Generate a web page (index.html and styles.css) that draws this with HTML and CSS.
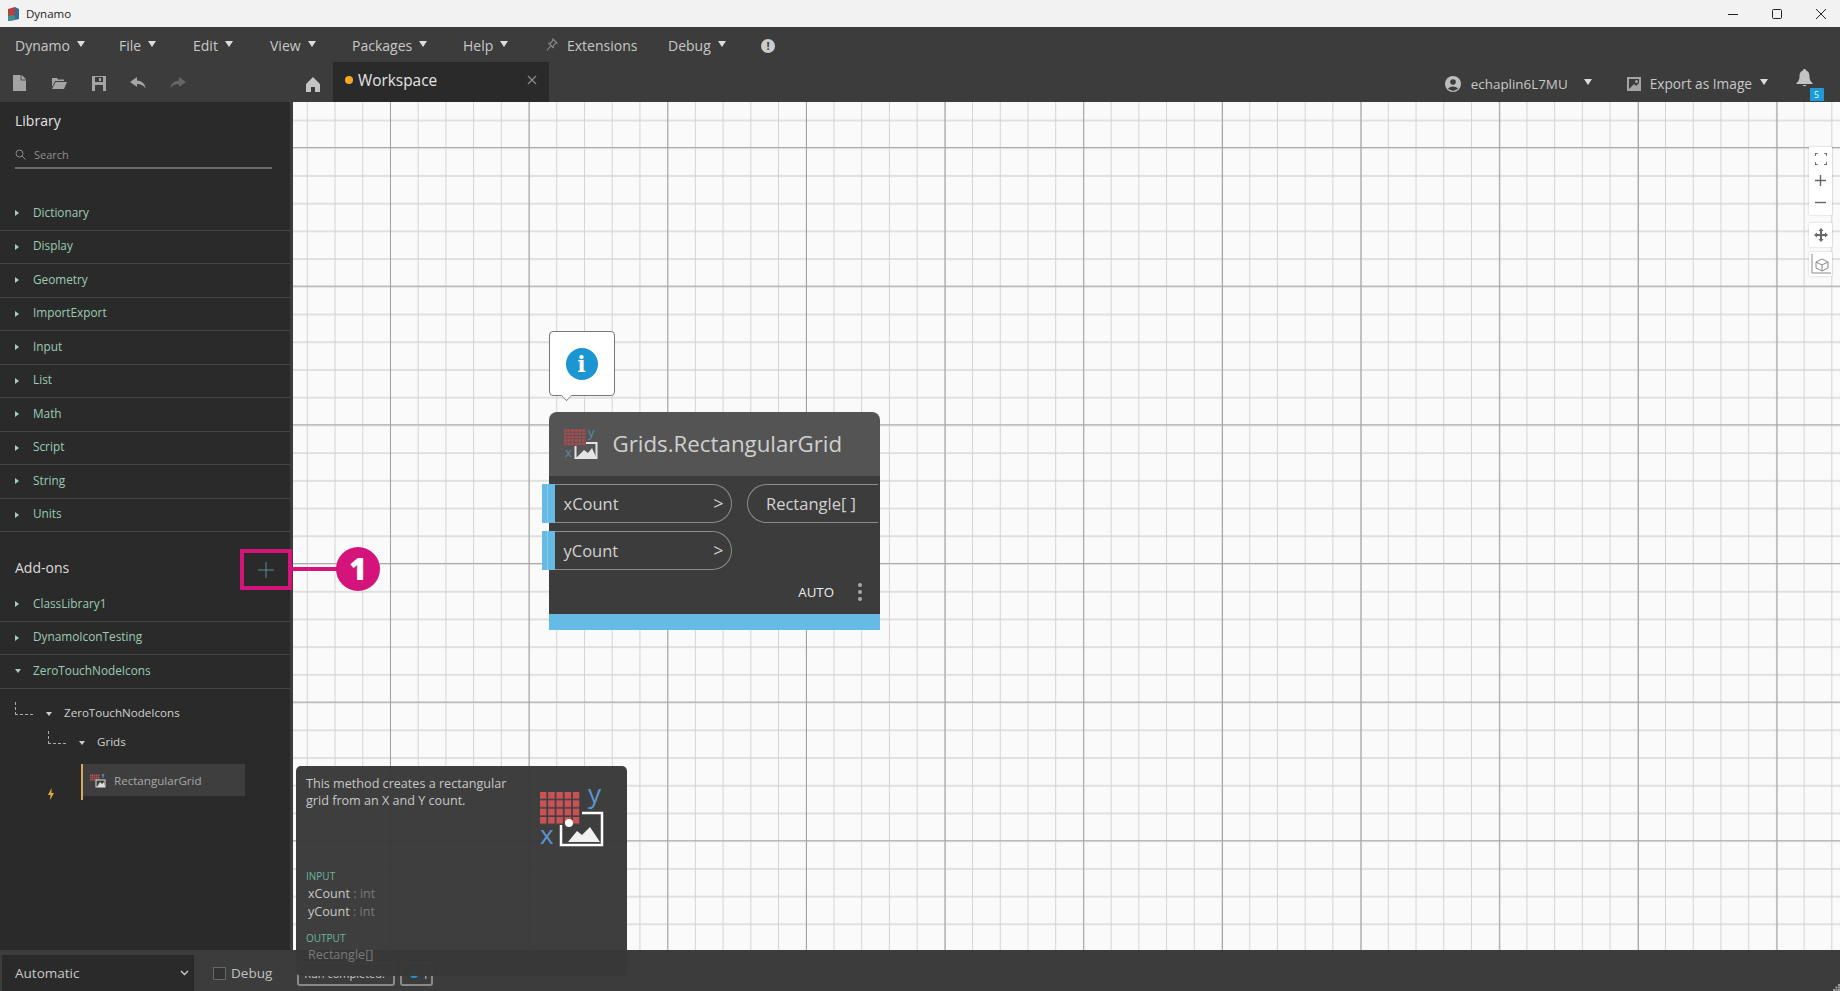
FILE: index.html
```html
<!DOCTYPE html>
<html lang="en">
<head>
  <meta charset="UTF-8">
  <title>Dynamo</title>
  <link rel="stylesheet" href="styles.css">
</head>
<body>
<div class="app">

  <header class="titlebar">
    <div class="title-left">
      <svg class="app-logo" width="12" height="14" viewBox="0 0 12 14"><path d="M0 2 L7 0 L7 13 L0 14 Z" fill="#b5403f"/><path d="M7 0 L11 2 L11 12 L7 13 Z" fill="#2f6d9c"/><path d="M0 9 L4 8 L7 9 L7 13 L0 14 Z" fill="#3f8f8c"/></svg>
      <span>Dynamo</span>
    </div>
    <div class="win-btns">
      <svg width="12" height="12" viewBox="0 0 12 12"><path d="M1 6.500 H11" stroke="#222" stroke-width="1"/></svg>
      <svg width="12" height="12" viewBox="0 0 12 12"><rect x="1.500" y="1.500" width="9" height="9" rx="1" fill="none" stroke="#222"/></svg>
      <svg width="12" height="12" viewBox="0 0 12 12"><path d="M1 1 L11 11 M11 1 L1 11" stroke="#222"/></svg>
    </div>
  </header>

  <nav class="menubar">
    <span class="menu-item w-dynamo">Dynamo <i class="caret"></i></span>
    <span class="menu-item w-file">File <i class="caret"></i></span>
    <span class="menu-item w-edit">Edit <i class="caret"></i></span>
    <span class="menu-item w-view">View <i class="caret"></i></span>
    <span class="menu-item w-packages">Packages <i class="caret"></i></span>
    <span class="menu-item w-help">Help <i class="caret"></i></span>
    <span class="menu-item w-ext">
      <svg width="12" height="14" viewBox="0 0 12 14"><path d="M7 1 L11 5 L9 5.500 L7 8.500 L7.500 10 L2.500 5 L4 5.500 L6.500 3 Z M4.500 8 L1 12.500" fill="none" stroke="#8a8a8a" stroke-width="1.100"/></svg>
      Extensions
    </span>
    <span class="menu-item w-debug">Debug <i class="caret"></i></span>
    <span class="menu-info">!</span>
  </nav>

  <div class="toolbar">
    <div class="tool-icons">
      <svg width="13" height="16" viewBox="0 0 13 16"><path d="M0 0 H8 L13 5 V16 H0 Z" fill="#a4a4a4"/><path d="M8.800 0 V4.200 H13 Z" fill="#a4a4a4"/><path d="M8 0 V5 H13" fill="none" stroke="#3c3c3c" stroke-width=".8"/></svg>
      <svg width="16" height="12" viewBox="0 0 16 12"><path d="M1 1 H6 L7 2.500 H13 V4 H4 L1 10 Z M4.500 5 H16 L13 12 H1 Z" fill="#a4a4a4"/></svg>
      <svg width="14" height="15" viewBox="0 0 14 15"><path d="M0 0 H14 V15 H0 Z" fill="#a4a4a4"/><rect x="3" y="1" width="8" height="5" fill="#3c3c3c"/><rect x="3" y="9" width="8" height="6" fill="#3c3c3c"/><rect x="7" y="2" width="2" height="3" fill="#a4a4a4"/></svg>
      <svg width="16" height="12" viewBox="0 0 16 12"><path d="M7 0 L0 5 L7 10 V7 C11 7 14 8.500 15.500 11.500 C15.500 6.500 11 3.500 7 3.500 Z" fill="#a4a4a4"/></svg>
      <svg width="16" height="12" viewBox="0 0 16 12"><path d="M9 0 L16 5 L9 10 V7 C5 7 2 8.500 .5 11.500 C.5 6.500 5 3.500 9 3.500 Z" fill="#666"/></svg>
    </div>
    <svg class="home-icon" width="14" height="15" viewBox="0 0 14 15"><path d="M7 0 L14 7 V15 H9 V10 H5 V15 H0 V7 Z" fill="#c4c4c4"/></svg>
    <div class="tab">
      <span class="tab-dot"></span>
      <span class="tab-name">Workspace</span>
      <svg class="tab-close" width="10" height="10" viewBox="0 0 10 10"><path d="M1 1 L9 9 M9 1 L1 9" stroke="#8c8c8c" stroke-width="1.200"/></svg>
    </div>
    <div class="toolbar-right">
      <svg width="16" height="16" viewBox="0 0 16 16"><circle cx="8" cy="8" r="8" fill="#bdbdbd"/><circle cx="8" cy="6" r="2.800" fill="#3c3c3c"/><path d="M3 13 C4 9.500 12 9.500 13 13 L8 15 Z" fill="#3c3c3c"/></svg>
      <span class="user-name">echaplin6L7MU</span>
      <i class="caret"></i>
      <svg class="export-icon" width="14" height="14" viewBox="0 0 14 14"><rect width="14" height="14" fill="#a4a4a4"/><rect x="2" y="2" width="10" height="10" fill="#3c3c3c"/><path d="M2 12 L7 7 L9 9 L12 6 V12 Z" fill="#a4a4a4"/><circle cx="9.500" cy="4.500" r="1.500" fill="#a4a4a4"/></svg>
      <span class="export-label">Export as Image</span>
      <i class="caret"></i>
      <div class="bell">
        <svg width="17" height="18" viewBox="0 0 17 18"><path d="M8.500 0 C9.500 0 10 .6 10 1.500 C13 2.500 13.500 5 13.500 8 C13.500 11 15 13 16.500 14 V15 H.5 V14 C2 13 3.500 11 3.500 8 C3.500 5 4 2.500 7 1.500 C7 .6 7.500 0 8.500 0 Z" fill="#c4c4c4"/><path d="M6.500 16 H10.500 C10.500 17.500 6.500 17.500 6.500 16 Z" fill="#c4c4c4"/></svg>
        <span class="bell-count">5</span>
      </div>
    </div>
  </div>

  <div class="main">
    <aside class="sidebar">
      <h2 class="lib-title">Library</h2>
      <div class="search">
        <svg width="11" height="11" viewBox="0 0 11 11"><circle cx="4.500" cy="4.500" r="3.500" fill="none" stroke="#8d8d8d"/><path d="M7 7 L10.500 10.500" stroke="#8d8d8d"/></svg>
        <span>Search</span>
      </div>
      <ul class="lib-list">
        <li class="lib-row"><i class="arrow"></i>Dictionary</li>
        <li class="lib-row"><i class="arrow"></i>Display</li>
        <li class="lib-row"><i class="arrow"></i>Geometry</li>
        <li class="lib-row"><i class="arrow"></i>ImportExport</li>
        <li class="lib-row"><i class="arrow"></i>Input</li>
        <li class="lib-row"><i class="arrow"></i>List</li>
        <li class="lib-row"><i class="arrow"></i>Math</li>
        <li class="lib-row"><i class="arrow"></i>Script</li>
        <li class="lib-row"><i class="arrow"></i>String</li>
        <li class="lib-row"><i class="arrow"></i>Units</li>
      </ul>
      <div class="addons-head">
        <span>Add-ons</span>
      </div>
      <ul class="lib-list">
        <li class="lib-row"><i class="arrow"></i>ClassLibrary1</li>
        <li class="lib-row"><i class="arrow"></i>DynamoIconTesting</li>
        <li class="lib-row"><i class="arrow open"></i>ZeroTouchNodeIcons</li>
      </ul>
      <div class="tree">
        <div class="tree-row level-1"><span class="elbow"></span><i class="arrow open light"></i>ZeroTouchNodeIcons</div>
        <div class="tree-row level-2"><span class="elbow"></span><i class="arrow open light"></i>Grids</div>
        <div class="leaf-row">
          <svg class="bolt" width="6" height="12" viewBox="0 0 6 12"><path d="M3.500 0 L0 7 H2.500 L2 12 L6 5 H3.500 Z" fill="#e0a93e"/></svg>
          <div class="leaf">
            <svg width="16" height="15" viewBox="0 0 16 15">
              <defs><pattern id="cells-s" width="2" height="2" patternUnits="userSpaceOnUse"><rect width="1.500" height="1.500" fill="#b8504f"/></pattern></defs>
              <rect x="0" y="1" width="10" height="7" fill="url(#cells-s)"/>
              <rect x="6" y="7" width="9" height="7" fill="#3e3e3e" stroke="#ddd"/>
              <path d="M7 14 L10 9 L12 11 L14 9 L15 14 Z" fill="#ddd"/>
              <path d="M12 1 L13 3 L14 1 M13 3 V5" stroke="#5b94d0" fill="none"/>
            </svg>
            RectangularGrid
          </div>
        </div>
      </div>
    </aside>

    <section class="canvas">
      <div class="nav-group">
        <svg width="12" height="12" viewBox="0 0 12 12"><path d="M0 3 V0 H3 M9 0 H12 V3 M12 9 V12 H9 M3 12 H0 V9" fill="none" stroke="#555" stroke-width="1.600"/></svg>
        <svg width="11" height="11" viewBox="0 0 11 11"><path d="M5.500 0 V11 M0 5.500 H11" stroke="#666" stroke-width="1.400"/></svg>
        <svg width="11" height="11" viewBox="0 0 11 11"><path d="M0 5.500 H11" stroke="#666" stroke-width="1.400"/></svg>
      </div>
      <div class="nav-btn pan">
        <svg width="14" height="14" viewBox="0 0 14 14"><path d="M7 0 L9.500 3 H8 V6 H11 V4.500 L14 7 L11 9.500 V8 H8 V11 H9.500 L7 14 L4.500 11 H6 V8 H3 V9.500 L0 7 L3 4.500 V6 H6 V3 H4.500 Z" fill="#666"/></svg>
      </div>
      <div class="nav-btn cube">
        <svg width="20" height="21" viewBox="0 0 20 21"><path d="M1 0 V19 H20" fill="none" stroke="#888"/><path d="M11 5 L17 8 V14 L11 17 L5 14 V8 Z M5 8 L11 11 L17 8 M11 11 V17" fill="none" stroke="#888"/></svg>
      </div>

      <div class="info-bubble">
        <span class="info-dot">i</span>
      </div>

      <div class="node">
        <div class="node-head">
          <svg class="node-icon" width="38" height="40" viewBox="0 -4 38 40">
            <defs><pattern id="cells-m" width="3.600" height="3.300" patternUnits="userSpaceOnUse"><rect width="2.800" height="2.500" fill="#a94b4e"/></pattern></defs>
            <text x="24" y="11" font-size="13" fill="#5f87ad" font-family="Open Sans">y</text>
            <text x="1" y="31" font-size="13" fill="#5f87ad" font-family="Open Sans">x</text>
            <rect x="11.500" y="17" width="21" height="15" fill="#545454" stroke="#e4e4e4" stroke-width="2"/>
            <rect x="0" y="3" width="22" height="17" fill="#545454"/>
            <rect x="0" y="3" width="22" height="17" fill="url(#cells-m)"/>
            <path d="M13 31 L20 24 L24 27 L28 22 L32 31 Z" fill="#e4e4e4"/>
          </svg>
          <span class="node-name">Grids.RectangularGrid</span>
        </div>
        <div class="node-body">
          <div class="node-io">
            <div class="ports">
              <div class="port in"><span>xCount</span><b>&gt;</b></div>
              <div class="port in"><span>yCount</span><b>&gt;</b></div>
            </div>
            <div class="port out">Rectangle[ ]</div>
          </div>
          <div class="node-foot">
            <span>AUTO</span>
            <span class="dots"><i></i><i></i><i></i></span>
          </div>
        </div>
        <div class="node-strip"></div>
      </div>

      <div class="callout-box">
        <svg width="16" height="16" viewBox="0 0 16 16"><path d="M8 0 V16 M0 8 H16" stroke="#5d8a95"/></svg>
      </div>
      <div class="callout-line"></div>
      <div class="callout-num">1</div>
    </section>
  </div>

  <footer class="statusbar">
    <div class="run-select"><span>Automatic</span>
      <svg width="9" height="6" viewBox="0 0 9 6"><path d="M1 1 L4.500 4.500 L8 1" fill="none" stroke="#ccc" stroke-width="1.400"/></svg>
    </div>
    <label class="debug"><span class="check"></span>Debug</label>
    <span class="run-state">Run completed.</span>
    <span class="run-count"><i></i>1</span>
    <svg class="grip" width="7" height="7" viewBox="0 0 7 7"><path d="M5 0 H7 V2 H5 Z M2.500 2.500 H4.500 V4.500 H2.500 Z M5 2.500 H7 V4.500 H5 Z M0 5 H2 V7 H0 Z M2.500 5 H4.500 V7 H2.500 Z M5 5 H7 V7 H5 Z" fill="#9a9a9a"/></svg>
  </footer>

  <div class="tooltip">
    <div class="tip-top">
      <p>This method creates a rectangular grid from an X and Y count.</p>
      <svg class="tip-icon" width="68" height="80" viewBox="0 -12 68 80">
        <defs><pattern id="cells-l" x="2" y="7" width="8.200" height="8.300" patternUnits="userSpaceOnUse"><rect width="6.500" height="6.800" fill="#c85254"/></pattern></defs>
        <text x="50" y="18" font-size="26" fill="#5b94d0" font-family="Open Sans">y</text>
        <text x="2" y="59" font-size="26" fill="#5b94d0" font-family="Open Sans">x</text>
        <rect x="23" y="28" width="41" height="32" fill="#3e3e3e" stroke="#fff" stroke-width="2.500"/>
        <rect x="20" y="25" width="24" height="15" fill="#3e3e3e"/>
        <rect x="2" y="7" width="41" height="33" fill="url(#cells-l)"/>
        <path d="M30 57 L39 46 L44 50 L52 42 L62 57 Z" fill="#f1f1f1"/>
        <circle cx="31" cy="38" r="4" fill="#fff"/>
      </svg>
    </div>
    <div class="tip-label">INPUT</div>
    <div class="tip-line">xCount <em>: int</em></div>
    <div class="tip-line">yCount <em>: int</em></div>
    <div class="tip-label second">OUTPUT</div>
    <div class="tip-line dim">Rectangle[]</div>
  </div>

</div>
</body>
</html>
```

FILE: styles.css
```css
* { box-sizing: border-box; }
html, body { margin: 0; height: 100%; overflow: hidden; }
body { font-family: "Open Sans", "Noto Sans", sans-serif; background: #3c3c3c; color: #ddd; }
ul { list-style: none; margin: 0; padding: 0; }
.app { position: relative; width: 1840px; height: 991px; display: flex; flex-direction: column; }

/* window title */
.titlebar { height: 27px; background: #f2f2f2; color: #222; display: flex; justify-content: space-between; align-items: center; font-size: 11.500px; }
.title-left { display: flex; align-items: center; gap: 6px; padding-left: 8px; }
.win-btns { display: flex; gap: 32px; padding-right: 13px; }

/* menu */
.menubar { height: 35px; display: flex; align-items: center; padding-left: 15px; font-size: 14px; color: #c8c8c8; background: #3c3c3c; padding-top: 1px; }
.menu-item { display: inline-flex; align-items: center; gap: 7px; }
.w-dynamo { width: 104px; }
.w-file { width: 74px; }
.w-edit { width: 77px; }
.w-view { width: 82px; }
.w-packages { width: 111px; }
.w-help { width: 83px; }
.w-ext { width: 122px; gap: 9px; }
.w-debug { width: 93px; }
.caret { display: inline-block; width: 0; height: 0; border-left: 4px solid transparent; border-right: 4px solid transparent; border-top: 6px solid #ddd; margin-top: -3px; }
.menu-info { width: 14px; height: 14px; border-radius: 50%; background: #ccc; color: #3c3c3c; font-size: 11px; font-weight: 700; line-height: 14px; text-align: center; margin-top: 1px; }

/* toolbar */
.toolbar { height: 40px; display: flex; align-items: stretch; }
.tool-icons { width: 306px; display: grid; grid-template-columns: repeat(5, 39.500px); justify-items: center; align-content: center; align-items: center; padding-top: 2px; }
.home-icon { align-self: center; margin-right: 13px; margin-top: 5px; }
.tab { width: 216px; background: #2a2a2a; display: flex; align-items: center; padding: 0 12px 4px 12px; }
.tab-dot { width: 8px; height: 8px; border-radius: 50%; background: #f5a623; margin-right: 5px; }
.tab-name { font-size: 15.400px; color: #e4e4e4; flex: 1; }
.toolbar-right { margin-left: auto; display: flex; align-items: center; color: #c8c8c8; font-size: 13.400px; padding-top: 3px; padding-right: 27.500px; }
.user-name { margin-left: 10px; margin-right: 16px; }
.export-icon { margin-left: 35px; margin-right: 9px; }
.export-label { margin-right: 8px; margin-top: -1px; font-size: 13.700px; }
.bell { position: relative; margin-left: 27.500px; margin-top: -8px; }
.bell-count { position: absolute; left: 14px; top: 19px; width: 14px; height: 13px; background: #1f9ad6; color: #dff; font-size: 9px; line-height: 13px; text-align: center; }

/* main */
.main { flex: 1; display: flex; min-height: 0; }
.sidebar { width: 290px; background: #2a2a2a; padding-top: 9px; }
.lib-title { margin: 0; padding-left: 15px; font-size: 14px; font-weight: 400; color: #e2e2e2; }
.search { margin: 15px 18px 0 15px; height: 24px; border-bottom: 2px solid #6c6c6c; display: flex; align-items: center; gap: 8px; font-size: 11px; color: #8d8d8d; padding-bottom: 4px; }
.lib-list { margin-top: 28px; }
.lib-row { height: 33.500px; display: flex; align-items: center; border-bottom: 1px solid #454545; font-size: 11.800px; color: #9dcab4; padding-left: 15px; padding-bottom: 3px; }
.arrow { width: 0; height: 0; border-top: 3px solid transparent; border-bottom: 3px solid transparent; border-left: 4px solid #a8cfc0; margin-right: 14px; margin-top: 3px; }
.arrow.open { border-left: 3px solid transparent; border-right: 3px solid transparent; border-top: 4px solid #a8cfc0; border-bottom: 0; margin-right: 12px; margin-top: 1px; }
.arrow.light { border-top-color: #ccc; margin-left: 13px; margin-right: 12px; margin-top: 3px; }
.addons-head { margin-top: 26px; padding-left: 15px; font-size: 14px; color: #dcdcdc; height: 30px; }
.addons-head + .lib-list { margin-top: 0; }
.addons-head + .lib-list .lib-row:nth-child(3) { height: 34px; }
.tree { font-size: 11.600px; color: #d0d0d0; }
.tree-row { display: flex; align-items: center; height: 29px; }
.level-1 { padding-left: 15px; margin-top: 9px; }
.level-2 { padding-left: 48px; }
.elbow { width: 18px; height: 13px; border-left: 1px dashed #aaa; border-bottom: 1px dashed #aaa; margin-top: -8px; }
.leaf-row { display: flex; align-items: flex-start; margin-top: 8px; padding-left: 48px; }
.bolt { margin-top: 24px; margin-right: 29px; }
.leaf { position: relative; width: 162px; height: 32px; background: #3e3e3e; display: flex; align-items: center; gap: 8px; padding-left: 7px; color: #a8a8a8; }
.leaf::before { content: ""; position: absolute; left: -2px; top: 0; width: 2px; height: 36px; background: #d8a85c; }

/* canvas and grid */
.canvas { position: relative; flex: 1; margin-left: 3px; background-color: #fafafa;
  background-image:
    linear-gradient(to right, #a0a0a0 1.200px, transparent 1.200px),
    linear-gradient(to bottom, #aaa 1.200px, transparent 1.200px),
    linear-gradient(to right, #d4d4d4 1.200px, transparent 1.200px),
    linear-gradient(to bottom, #e0e0e0 1.500px, transparent 1.500px);
  background-size: 138.667px 100%, 100% 138.667px, 27.733px 100%, 100% 27.733px;
  background-position: 97px 0, 0 45px, 13.800px 0, 0 17.500px;
}

/* zoom controls */
.nav-group { position: absolute; left: 1516px; top: 45px; width: 23px; height: 68px; background: #fff; box-shadow: 0 0 2px rgba(0,0,0,.2); display: flex; flex-direction: column; align-items: center; justify-content: space-around; padding: 1px 0 2px; }
.nav-btn { position: absolute; left: 1516px; width: 23px; background: #fff; box-shadow: 0 0 2px rgba(0,0,0,.2); display: flex; align-items: center; justify-content: center; }
.pan { top: 121px; height: 24px; }
.cube { top: 150px; height: 24px; }

/* info bubble */
.info-bubble { position: absolute; left: 255.500px; top: 229px; width: 66px; height: 65px; background: #fff; border: 1px solid #777; border-radius: 4px; display: flex; align-items: center; justify-content: center; }
.info-bubble::after { content: ""; position: absolute; left: 11px; bottom: -6px; width: 10px; height: 10px; background: #fff; border-right: 1px solid #777; border-bottom: 1px solid #777; transform: rotate(45deg) scale(.7); }
.info-dot { width: 32px; height: 32px; border-radius: 50%; background: #1c95d3; color: #fff; font-family: "DejaVu Serif", serif; font-weight: 700; font-size: 22px; line-height: 32px; text-align: center; }

/* node */
.node { position: absolute; left: 255.500px; top: 309.500px; width: 331.500px; }
.node-head { height: 64px; background: #545454; border-radius: 8px 8px 0 0; display: flex; align-items: center; gap: 11px; padding-left: 15px; }
.node-icon { margin-top: -4px; }
.node-name { font-size: 22.300px; color: #cfcfcf; }
.node-body { height: 138px; background: #3c3c3c; display: flex; flex-direction: column; padding-top: 8px; }
.node-io { display: flex; justify-content: space-between; align-items: flex-start; }
.ports { display: flex; flex-direction: column; gap: 8px; margin-left: -7px; }
.port { height: 39px; color: #d2d2d2; display: flex; align-items: center; border: 1px solid #8a8a8a; }
.port.in { position: relative; width: 190px; margin-left: 0; border-left: 0; border-radius: 0 20px 20px 0; padding: 0 7px 0 22px; justify-content: space-between; font-size: 16.500px; }
.port.in::before { content: ""; position: absolute; left: 0; top: -1px; bottom: -1px; width: 13px; background: linear-gradient(to right, #65bbe6 5px, #8fc6e0 5px, #8fc6e0 6px, #65bbe6 6px); }
.port.in b { font-weight: 400; font-size: 18px; }
.port.out { width: 131px; margin-right: 2px; border-right: 0; border-radius: 20px 0 0 20px; padding-left: 18px; font-size: 16.500px; white-space: nowrap; }
.node-foot { margin-top: auto; height: 43px; display: flex; justify-content: flex-end; align-items: center; gap: 24px; padding-right: 18px; font-size: 13.300px; color: #eee; }
.dots { display: flex; flex-direction: column; gap: 3px; }
.dots i { width: 4px; height: 4px; border-radius: 50%; background: #aaa; }
.node-strip { height: 16px; background: #65bbe6; }

/* callout */
.callout-box { position: absolute; left: -53px; top: 447px; width: 52px; height: 41px; border: 4px solid #d4147a; display: flex; align-items: center; justify-content: center; }
.callout-line { position: absolute; left: -2px; top: 465px; width: 46px; height: 4px; background: #d4147a; }
.callout-num { position: absolute; left: 43px; top: 445px; width: 44px; height: 44px; border-radius: 50%; background: #d4147a; color: #fff; font-weight: 800; font-size: 30px; line-height: 44px; text-align: center; }

/* status */
.statusbar { height: 41px; background: #3c3c3c; display: flex; align-items: center; position: relative; font-size: 13.500px; }
.run-select { width: 192px; height: 36px; margin-top: 5px; margin-left: 2px; background: #2a2a2a; display: flex; align-items: center; justify-content: space-between; padding: 0 5.500px 1px 13px; color: #c8c8c8; }
.debug { display: flex; align-items: center; gap: 5px; color: #c0c0c0; margin-left: 19px; margin-top: 5px; }
.check { width: 13px; height: 13px; border: 1px solid #666; background: #333; }
.run-state { margin-left: 25px; align-self: flex-end; margin-bottom: 5px; height: 24px; width: 98px; border: 2px solid #8a8a8a; border-radius: 3px; font-size: 11px; line-height: 20px; padding-left: 5px; color: #ccc; overflow: hidden; white-space: nowrap; }
.run-count { margin-left: 5px; align-self: flex-end; margin-bottom: 5px; height: 24px; width: 33px; border: 2px solid #8a8a8a; border-radius: 3px; font-size: 11px; display: flex; align-items: center; gap: 4px; padding-left: 8px; color: #ccc; }
.run-count i { width: 8px; height: 8px; border-radius: 50%; background: #1c95d3; }
.grip { margin-left: auto; align-self: flex-end; }

/* tooltip over canvas and statusbar */
.tooltip { position: absolute; left: 296px; top: 766px; width: 331px; height: 210px; background: rgba(56,56,56,.97); border-radius: 5px; padding: 9px 10px; font-size: 12.600px; color: #c8c8c8; }
.tip-top { display: flex; justify-content: space-between; height: 82px; }
.tip-top p { margin: 0; width: 210px; line-height: 17px; }
.tip-icon { margin-top: -2px; margin-right: 11px; }
.tip-label { font-size: 10px; color: #69b89e; margin-top: 12px; margin-bottom: 2px; }
.tip-label.second { margin-top: 10px; margin-bottom: 1px; }
.tip-line { padding-left: 2px; line-height: 18px; }
.tip-line em { font-style: normal; color: #7a7a7a; }
.tip-line.dim { color: #7a7a7a; }
```
